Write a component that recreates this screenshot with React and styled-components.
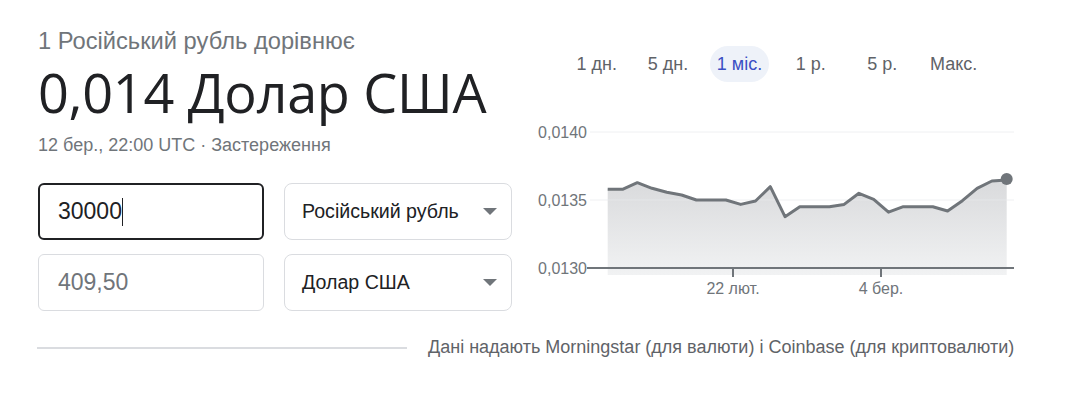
import React from "react";
import styled, { createGlobalStyle } from "styled-components";

const GlobalStyle = createGlobalStyle`
  body {
    margin: 0;
    background: #fff;
    font-family: "Liberation Sans", Arial, sans-serif;
  }
`;

const Page = styled.main`
  width: 1091px;
  height: 410px;
  padding: 28px 0 0 38px;
  box-sizing: border-box;
`;

const Top = styled.section`
  display: flex;
  align-items: flex-start;
  gap: 8px;
`;

const Left = styled.div`
  width: 474px;
  display: flex;
  flex-direction: column;
`;

const Subtitle = styled.div`
  font-size: 23.7px;
  line-height: 26px;
  color: #70757a;
`;

const Result = styled.div`
  margin-top: 6px;
  font-family: "Open Sans", sans-serif;
  font-size: 54px;
  line-height: 64px;
  color: #202124;
  letter-spacing: -0.3px;
`;

const Meta = styled.div`
  margin-top: 11px;
  font-size: 18px;
  line-height: 20px;
  color: #70757a;
`;

const Form = styled.div`
  margin-top: 28px;
  display: grid;
  grid-template-columns: 226px 228px;
  grid-auto-rows: 57px;
  column-gap: 20px;
  row-gap: 14px;
`;

const Field = styled.div`
  display: flex;
  align-items: center;
  box-sizing: border-box;
  padding-left: ${({ $active }) => ($active ? "18px" : "19px")};
  border: ${({ $active }) => ($active ? "2px solid #202124" : "1px solid #dadce0")};
  border-radius: 6px;
  font-size: 23px;
  color: ${({ $active }) => ($active ? "#202124" : "#70757a")};
`;

const Caret = styled.span`
  display: inline-block;
  width: 0;
  height: 28px;
  border-left: 1.5px solid #202124;
`;

const Select = styled.div`
  display: flex;
  align-items: center;
  justify-content: space-between;
  box-sizing: border-box;
  padding: 0 14px 0 17px;
  border: 1px solid #dadce0;
  border-radius: 8px;
  font-size: 19.6px;
  color: #202124;
`;

const Arrow = styled.span`
  width: 0;
  height: 0;
  border-left: 7px solid transparent;
  border-right: 7px solid transparent;
  border-top: 7px solid #70757a;
`;

const Right = styled.div`
  width: 500px;
  display: flex;
  flex-direction: column;
`;

const Tabs = styled.nav`
  display: flex;
  padding-left: 41px;
  margin-top: 18px;
`;

const Tab = styled.div`
  width: 71.4px;
  display: flex;
  justify-content: center;
`;

const TabLabel = styled.span`
  height: 36px;
  padding: 0 7px;
  border-radius: 18px;
  display: flex;
  align-items: center;
  font-size: 18px;
  color: ${({ $active }) => ($active ? "#3b4fc4" : "#5f6368")};
  background: ${({ $active }) => ($active ? "#eef2f9" : "transparent")};
`;

const Chart = styled.svg`
  display: block;
  margin-top: 33px;
  overflow: visible;
`;

const Footer = styled.footer`
  display: flex;
  align-items: center;
  gap: 21px;
  margin-top: 26px;
`;

const Rule = styled.div`
  width: 370px;
  height: 2px;
  margin-left: -1px;
  background: #dadce0;
`;

const Source = styled.span`
  font-size: 18px;
  color: #5f6368;
`;

const ranges = ["1 дн.", "5 дн.", "1 міс.", "1 р.", "5 р.", "Макс."];

const rates = [
  0.013579, 0.013579, 0.013627, 0.013586, 0.013557, 0.013537, 0.0135,
  0.0135, 0.0135, 0.013468, 0.013493, 0.013598, 0.013377, 0.013451,
  0.013451, 0.013451, 0.013468, 0.013549, 0.013505, 0.01341, 0.013451,
  0.013451, 0.013451, 0.013419, 0.013495, 0.013586, 0.01364, 0.013647,
];

const yOf = (v) => 17 + ((0.014 - v) / 0.001) * 136;
const xOf = (i) => 87.7 + (i * 399) / (rates.length - 1);

const PriceChart = () => {
  const pts = rates.map((v, i) => `${xOf(i).toFixed(1)},${yOf(v).toFixed(1)}`);
  const last = rates.length - 1;
  const area = `M${xOf(0)},160 L${pts.join(" L")} L${xOf(last)},160 Z`;
  const gridY = [
    ["0,0140", 17],
    ["0,0135", 85],
  ];

  return (
    <Chart width="500" height="185" viewBox="0 0 500 185">
      <defs>
        <linearGradient id="fill" x1="0" y1="0" x2="0" y2="1">
          <stop offset="0" stopColor="#d9dadc" />
          <stop offset="1" stopColor="#f1f2f3" />
        </linearGradient>
      </defs>
      <path d={area} fill="url(#fill)" />
      {gridY.map(([label, y]) => (
        <g key={label}>
          <line x1="70" x2="494" y1={y} y2={y} stroke="#e8eaed" strokeOpacity="0.7" />
          <text x="67" y={y + 5.5} textAnchor="end" fontSize="16" fill="#70757a" fontFamily="Liberation Sans, Arial, sans-serif">
            {label}
          </text>
        </g>
      ))}
      <text x="67" y="158.5" textAnchor="end" fontSize="16" fill="#70757a" fontFamily="Liberation Sans, Arial, sans-serif">
        0,0130
      </text>
      <line x1="67" x2="494" y1="153" y2="153" stroke="#70757a" strokeWidth="2" />
      <line x1="213" x2="213" y1="153" y2="162" stroke="#70757a" strokeWidth="2" />
      <line x1="361" x2="361" y1="153" y2="162" stroke="#70757a" strokeWidth="2" />
      <text x="213" y="179" textAnchor="middle" fontSize="16" fill="#70757a" fontFamily="Liberation Sans, Arial, sans-serif">
        22 лют.
      </text>
      <text x="361" y="179" textAnchor="middle" fontSize="16" fill="#70757a" fontFamily="Liberation Sans, Arial, sans-serif">
        4 бер.
      </text>
      <polyline points={pts.join(" ")} fill="none" stroke="#70757a" strokeWidth="3" strokeLinejoin="round" />
      <circle cx={xOf(last)} cy={yOf(rates[last]) - 1} r="6" fill="#70757a" />
    </Chart>
  );
};

const App = () => (
  <Page>
    <GlobalStyle />
    <Top>
      <Left>
        <Subtitle>1 Російський рубль дорівнює</Subtitle>
        <Result>0,014 Долар США</Result>
        <Meta>12 бер., 22:00 UTC · Застереження</Meta>
        <Form>
          <Field $active>
            30000
            <Caret />
          </Field>
          <Select>
            Російський рубль
            <Arrow />
          </Select>
          <Field>409,50</Field>
          <Select>
            Долар США
            <Arrow />
          </Select>
        </Form>
      </Left>
      <Right>
        <Tabs>
          {ranges.map((r) => (
            <Tab key={r}>
              <TabLabel $active={r === "1 міс."}>{r}</TabLabel>
            </Tab>
          ))}
        </Tabs>
        <PriceChart />
      </Right>
    </Top>
    <Footer>
      <Rule />
      <Source>Дані надають Morningstar (для валюти) і Coinbase (для криптовалюти)</Source>
    </Footer>
  </Page>
);

export default App;
